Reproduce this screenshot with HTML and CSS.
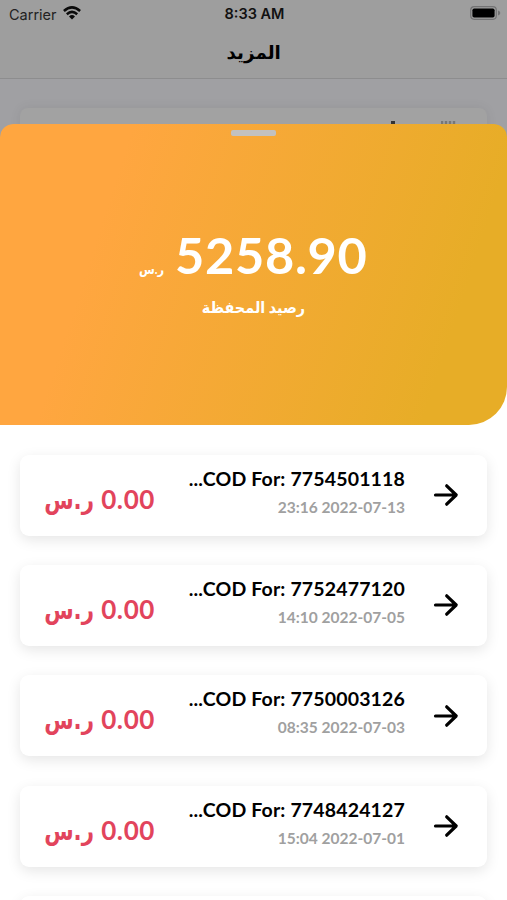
FILE: index.html
```html
<!DOCTYPE html>
<html lang="ar">
<head>
<meta charset="utf-8">
<title>المزيد</title>
<link rel="stylesheet" href="styles.css">
</head>
<body>
<svg class="defs" width="0" height="0"><symbol id="arrow" viewBox="0 0 26 24"><path d="M2.500 12H23M13.700 2.800 23.200 12l-9.500 9.200" fill="none" stroke="#000" stroke-width="3.200" stroke-linecap="round" stroke-linejoin="round"/></symbol></svg>
<header class="top">
  <div class="status">
    <div class="carrier"><span>Carrier</span>
      <svg width="18" height="14" viewBox="0 0 18 14" fill="none" stroke="#0b0b0b" stroke-width="2.5"><path d="M.9 5Q9-2.3 17.1 5M3.8 8.2Q9 3.6 14.2 8.2"/><path d="M6 10.4Q9 7.8 12 10.4L9 13.5Z" fill="#0b0b0b" stroke="none"/></svg>
    </div>
    <div class="time">8:33 AM</div>
    <svg class="battery" width="31" height="14" viewBox="0 0 31 14"><rect x=".7" y=".7" width="25.6" height="12.6" rx="3.5" fill="none" stroke="#737374" stroke-width="1.2"/><rect x="2.4" y="2.4" width="22.2" height="9.2" rx="1.8"/><path d="M28 4.5q2.3.8 2.3 2.5T28 9.500Z" fill="#737374"/></svg>
  </div>
  <h1 class="title"><span>المزيد</span></h1>
</header>
<div class="behind"><div class="behind-card"><i class="speck"></i><i class="speck wide"></i></div></div>
<main class="sheet">
  <section class="wallet">
    <div class="handle"></div>
    <div class="balance"><span class="unit" dir="rtl">ر.س</span><span class="sum">5258.90</span></div>
    <div class="label" dir="rtl"><span>رصيد المحفظة</span></div>
  </section>
  <section class="list">
    <article class="card"><div class="amount"><span class="cur" dir="rtl">ر.س</span><span>0.00</span></div><div class="info"><div class="name">...COD For: 7754501118</div><div class="date">23:16 2022-07-13</div></div><svg class="arrow"><use href="#arrow"/></svg></article>
    <article class="card"><div class="amount"><span class="cur" dir="rtl">ر.س</span><span>0.00</span></div><div class="info"><div class="name">...COD For: 7752477120</div><div class="date">14:10 2022-07-05</div></div><svg class="arrow"><use href="#arrow"/></svg></article>
    <article class="card"><div class="amount"><span class="cur" dir="rtl">ر.س</span><span>0.00</span></div><div class="info"><div class="name">...COD For: 7750003126</div><div class="date">08:35 2022-07-03</div></div><svg class="arrow"><use href="#arrow"/></svg></article>
    <article class="card"><div class="amount"><span class="cur" dir="rtl">ر.س</span><span>0.00</span></div><div class="info"><div class="name">...COD For: 7748424127</div><div class="date">15:04 2022-07-01</div></div><svg class="arrow"><use href="#arrow"/></svg></article>
    <article class="card"></article>
  </section>
</main>
</body>
</html>
```
FILE: styles.css
```css
* { box-sizing: border-box; }
body { margin: 0; height: 900px; overflow: hidden; background: #a0a0a3; font-family: Lato, "DejaVu Sans", sans-serif; color: #000; }
.defs { position: absolute; }
.top { height: 79px; background: #9e9e9e; border-bottom: 1px solid #8d8d8e; }
.status { height: 28px; display: grid; grid-template-columns: 1fr auto 1fr; align-items: center; padding: 0 6px 0 9px; font-family: Inter, sans-serif; }
.carrier { display: flex; align-items: center; gap: 6px; font-size: 14.5px; color: #222; }
.carrier svg { margin-top: -2px; }
.time { font-size: 14.5px; font-weight: 600; color: #111; margin: -1px 1px 0 0; }
.battery { justify-self: end; margin-top: -2px; }
.title { margin: 0; height: 48px; line-height: 48px; text-align: center; font-size: 18px; font-weight: 700; }
.title span { display: inline-block; transform: scaleX(1.02); }
.behind { height: 45px; padding: 29px 20px 0; overflow: hidden; }
.behind-card { height: 60px; border-radius: 8px; background: #a2a2a2; box-shadow: 0 0 12px rgba(0,0,0,.07); display: flex; justify-content: flex-end; gap: 46px; padding: 13px 31px 0; }
.speck { width: 4px; height: 3px; background: #333; }
.speck.wide { width: 15px; background: repeating-linear-gradient(90deg, #777 0 2px, #999 2px 4px); }
.sheet { height: 776px; background: linear-gradient(transparent 20px, #fff 20px); border-radius: 13px 13px 0 0; overflow: hidden; }
.wallet { height: 301px; border-radius: 13px 13px 38px 0; background: linear-gradient(108deg, #ffa640 22%, #e7ad27 86%); color: #fff; display: flex; flex-direction: column; align-items: center; }
.handle { width: 45px; height: 6px; border-radius: 2px; background: #c2c1bf; margin-top: 6px; }
.balance { margin-top: 89px; height: 61px; line-height: 60px; display: flex; align-items: baseline; gap: 7px; }
.sum { font-size: 50.5px; font-weight: 700; letter-spacing: .7px; }
.unit { font-size: 13px; font-weight: 700; transform: scaleX(.88); transform-origin: left; }
.label { height: 42px; line-height: 41px; font-size: 16px; font-weight: 700; }
.label span { display: inline-block; transform: scaleX(.9); }
.list { display: flex; flex-direction: column; gap: 29.4px; padding: 29.5px 20px 0; }
.card { flex: none; height: 81px; border-radius: 9px; background: #fff; box-shadow: 0 4px 14px rgba(0,0,0,.1); display: flex; padding: 0 28px 0 25px; }
.amount { width: 110px; line-height: 88px; display: flex; justify-content: space-between; align-items: baseline; color: #e2445c; font-size: 26px; font-weight: 700; letter-spacing: .6px; }
.cur { width: 49px; font-family: "DejaVu Sans", sans-serif; direction: rtl; letter-spacing: 0; transform: scaleX(.82); transform-origin: right; white-space: nowrap; }
.info { flex: 1; margin-right: 28px; text-align: right; padding-top: 11px; white-space: nowrap; }
.name { font-size: 19.5px; line-height: 26px; font-weight: 700; letter-spacing: .15px; }
.date { font-size: 15.5px; line-height: 20px; margin-top: 5px; font-weight: 700; color: #a0a0a0; }
.arrow { width: 26px; height: 24px; margin-top: 28.5px; flex: none; }
```
